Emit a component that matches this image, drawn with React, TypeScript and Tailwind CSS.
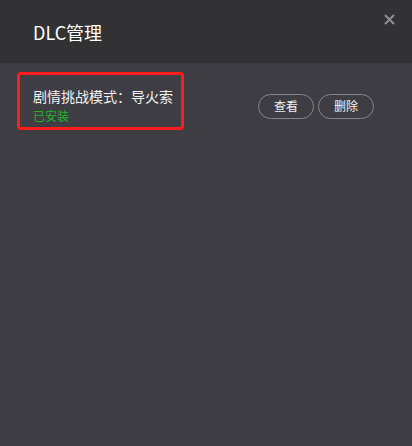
import React from 'react';

const font = { fontFamily: '"Noto Sans CJK SC", "Noto Sans", sans-serif' };

export default function App() {
  return (
    <div className="w-[412px] h-[446px] bg-[#3e3d43] flex flex-col" style={font}>
      {/* Header */}
      <div className="relative h-[63px] bg-[#323235] flex items-center pl-[33px] shrink-0">
        <h2 className="text-[18px] leading-[24px] text-white">DLC管理</h2>
        <button className="absolute top-[14px] right-[17px] text-[#8f8f8f]" aria-label="Close">
          <svg width="11" height="11" viewBox="0 0 11 11" fill="none">
            <path d="M1 1L10 10M10 1L1 10" stroke="currentColor" strokeWidth="2" />
          </svg>
        </button>
      </div>

      {/* List */}
      <div className="pt-[23px] pl-[33px] pr-[38px]">
        <div className="relative flex items-center justify-between">
          <div className="flex flex-col gap-[2px]">
            <div className="text-[14px] leading-[20px] text-[#f2f2f2]">剧情挑战模式：导火索</div>
            <div className="text-[12px] leading-[16px] text-[#22b32c]">已安装</div>
          </div>
          <div className="flex gap-[4px] mt-[2px]">
            <button className="w-[56px] h-[25px] rounded-full border border-[#85848a] text-[12px] text-[#f2f2f2]">
              查看
            </button>
            <button className="w-[56px] h-[25px] rounded-full border border-[#85848a] text-[12px] text-[#f2f2f2]">
              删除
            </button>
          </div>
          {/* highlight box */}
          <div className="absolute left-[-16px] top-[-14px] w-[167px] h-[58px] border-[3px] border-[#ff1c1c] rounded-[4px] pointer-events-none" />
        </div>
      </div>
    </div>
  );
}
